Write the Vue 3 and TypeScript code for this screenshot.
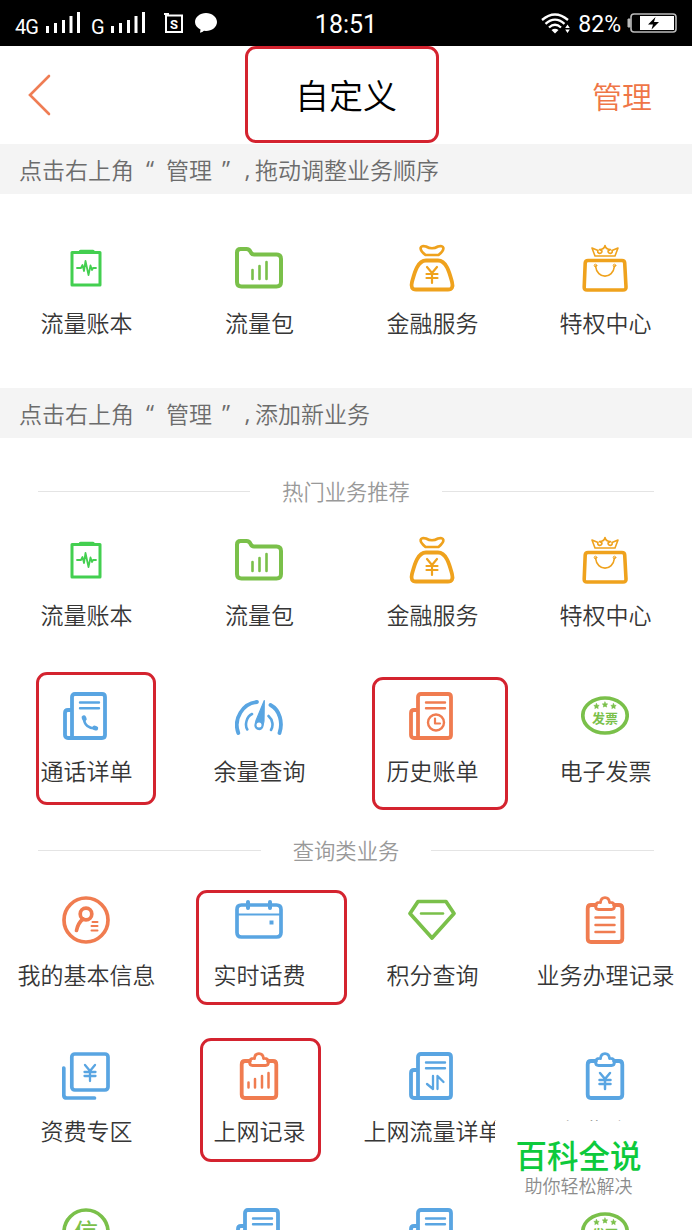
<script setup lang="ts">
import { defineComponent, h } from 'vue'

type IconName =
  | 'ledger' | 'folder' | 'moneybag' | 'giftbag' | 'call' | 'gauge' | 'history'
  | 'invoice' | 'profile' | 'calendar' | 'gem' | 'clipList' | 'cards'
  | 'clipBars' | 'traffic' | 'clipYen' | 'credit' | 'search'

interface Service { label: string; icon: IconName; mark?: string }

const yen = 'M-5 -7L0 -1L5 -7M-5.5 0H5.5M-5.5 4H5.5M0 -1V9'
const paper =
  '<path d="M13 2H40Q43 2 43 5V43Q43 46 40 46H6Q3 46 3 43V21Q3 18 6 18H9M10 46V5Q10 2 13 2" stroke-width="3.8"/><path d="M18 10.5H37M18 16.3H37" stroke-width="2.4"/>'
const clip =
  '<path d="M15 9H10Q6.700 9 6.700 12.500V42.500Q6.700 46 10 46H38Q41.300 46 41.300 42.500V12.500Q41.300 9 38 9H33" stroke-width="3.8"/><path d="M19.500 6.500C20 -.1 28 -.1 28.500 6.500Q33.500 6 33.500 10Q33.500 13.500 30.500 13.500H17.500Q14.500 13.500 14.500 10Q14.500 6 19.500 6.500Z" stroke-width="2.8"/>'
const colors = { blue: '#59a5e2', orange: '#f07c50', green: '#7ac04a', gold: '#efa21d', lime: '#43cf50' }

const art: Record<IconName, { color: string; body: string }> = {
  ledger: {
    color: colors.lime,
    body: '<rect x="10" y="8.500" width="28" height="32.500" stroke-width="3"/><path d="M18.500 7.500H31" stroke-width="3.500"/><path d="M15 24H19L20.500 21L22 27L23.500 17L26.500 31L28.500 21.500L30 26L31 24H34" stroke-width="1.800"/>',
  },
  folder: {
    color: colors.green,
    body: '<path d="M5.500 5H11.500C17 5 14 10.500 19 10.500H41.500Q46 10.500 46 15V38Q46 42.500 41.500 42.500H6.500Q2 42.500 2 38V8.500Q2 5 5.500 5Z" stroke-width="4"/><path d="M17.500 26V35M24.500 22V35M31.500 18V35" stroke-width="2.600"/>',
  },
  moneybag: {
    color: colors.gold,
    body: '<path d="M17.500 11C10 5 12 .8 18 2.500Q24 6 30 2.500C36 .8 38 5 30.500 11Z" stroke-width="2.700"/><path d="M18 16.500H30C39 16.500 42 31 44 38Q46 45.500 40 45.500H8Q2 45.500 4 38C6 31 9 16.500 18 16.500Z" stroke-width="3.800"/><g transform="translate(24 30)"><path d="' + yen + '" stroke-width="2.200"/></g>',
  },
  giftbag: {
    color: colors.gold,
    body: '<path d="M14 12L11 4L17 6.500C15.500 10 21 10.500 21 7L18.500 5.500C22 5.500 23.500 4 24 1.500C24.500 4 26 5.500 29.500 5.500L27 7C27 10.500 32.500 10 31 6.500L37 4L34 12Z" stroke-width="1.600"/><path d="M7 16.500H41Q43.500 16.500 43.700 19L45 43Q45.200 46 42 46H6Q3 46 3.200 43L4.200 19Q4.500 16.500 7 16.500Z" stroke-width="3.600"/><path d="M14.500 22C16 35.500 32 35.500 33.500 22" stroke-width="1.600"/><circle cx="14.500" cy="21.500" r="1.300"/><circle cx="33.500" cy="21.500" r="1.300"/>',
  },
  call: {
    color: colors.blue,
    body: paper + '<path d="M22 26.300C22 33 27 37 34 36.500" stroke-width="2.600"/><path d="M21.800 25.500L22.500 27M32.500 35.800L34 36.300" stroke-width="4.400"/>',
  },
  gauge: {
    color: colors.blue,
    body: '<path d="M3.300 41C-2 27 8 11 22 10M35.500 13C45 18 48 31 44.500 41" stroke-width="3.800"/><path d="M12.300 37.500C9.500 33 11.500 24.500 17 22M33.500 24C38 28 38.500 34 36 38" stroke-width="2.600"/><path d="M29.300 8.500L21 28.500L20 33A4 4 0 0 0 28 34L29 29Z" fill="currentColor" stroke-width="1.200"/><circle cx="24" cy="33" r="2.500" fill="#fff" stroke="none"/>',
  },
  history: {
    color: colors.orange,
    body: paper + '<circle cx="28" cy="30.500" r="8" stroke-width="2.400"/><path d="M27 26.500V31.500H32" stroke-width="2.200"/>',
  },
  invoice: {
    color: colors.green,
    body: '<ellipse cx="24" cy="23.500" rx="22.200" ry="17.500" stroke-width="3.700"/><text x="24" y="30.500" text-anchor="middle" font-size="13" font-weight="700" fill="currentColor" stroke="none">发票</text><path fill="currentColor" stroke="currentColor" stroke-width=".6" d="M15.500 11.500l.8 1.700 1.900.2-1.400 1.300.4 1.900-1.700-.9-1.700.9.4-1.900-1.400-1.300 1.900-.2zM24 10l.8 1.700 1.900.2-1.400 1.300.4 1.900-1.700-.9-1.700.9.4-1.900-1.400-1.300 1.900-.2zM32.500 11.500l.8 1.700 1.900.2-1.400 1.300.4 1.900-1.700-.9-1.700.9.4-1.900-1.400-1.300 1.900-.2z"/>',
  },
  profile: {
    color: colors.orange,
    body: '<circle cx="24" cy="24" r="22" stroke-width="3.700"/><circle cx="24" cy="18" r="5.800" stroke-width="3.700"/><path d="M21 23Q16 27 14.500 34.500" stroke-width="3.700"/><path d="M30.500 26H35.500M29.500 30H35.500M29.500 34.500H35.500" stroke-width="2"/>',
  },
  calendar: {
    color: colors.blue,
    body: '<path d="M6.500 9H41.500Q46 9 46 13.500V36.500Q46 41 41.500 41H6.500Q2 41 2 36.500V13.500Q2 9 6.500 9Z" stroke-width="3.700"/><path d="M3 18.500H45" stroke-width="2"/><path d="M13 6V12M35 6V12" stroke-width="4"/><path d="M34.500 26.500H38.500" stroke-width="4" stroke-linecap="butt"/>',
  },
  gem: {
    color: colors.green,
    body: '<path d="M10 5.500H38L46 17.500L24 42L2 17.500Z" stroke-width="3.700"/><path d="M13 17.500H35" stroke-width="2.500"/>',
  },
  clipList: { color: colors.orange, body: clip + '<path d="M14.500 21.500H33.500M14.500 29H33.500M14.500 36H33.500" stroke-width="2.500"/>' },
  cards: {
    color: colors.blue,
    body: '<rect x="9.800" y="2" width="36.200" height="36" rx="3" stroke-width="3.700"/><path d="M1.800 16V43Q1.800 46 4.800 46H32.500" stroke-width="3.700"/><g transform="translate(28 20)"><path d="' + yen + '" stroke-width="2.300"/></g>',
  },
  clipBars: { color: colors.orange, body: clip + '<path d="M13.500 30.500V35.500M20 27V35.500M27 24V35.500M33.500 21V35.500" stroke-width="2.500"/>' },
  traffic: { color: colors.blue, body: paper + '<path d="M19 32L25 37V24M29.500 37V24L35.500 30" stroke-width="2.300"/>' },
  clipYen: { color: colors.blue, body: clip + '<g transform="translate(24 28)"><path d="' + yen + '" stroke-width="2.500"/></g>' },
  credit: {
    color: colors.green,
    body: '<circle cx="24" cy="24" r="22" stroke-width="3.700"/><text x="24" y="32.500" text-anchor="middle" font-size="24" font-weight="500" fill="currentColor" stroke="none">信</text>',
  },
  search: { color: colors.blue, body: paper + '<circle cx="28" cy="31" r="7.500" stroke-width="2.400"/>' },
}

const ServiceIcon = defineComponent({
  props: { name: { type: String, required: true } },
  setup(props) {
    return () => {
      const item = art[props.name as IconName]
      return h('svg', {
        viewBox: '0 0 48 48', width: 48, height: 48, color: item.color, fill: 'none',
        stroke: 'currentColor', 'stroke-linecap': 'round', 'stroke-linejoin': 'round', innerHTML: item.body,
      })
    }
  },
})

const favorites: Service[] = [
  { label: '流量账本', icon: 'ledger' },
  { label: '流量包', icon: 'folder' },
  { label: '金融服务', icon: 'moneybag' },
  { label: '特权中心', icon: 'giftbag' },
]

const sections: { title: string; id: string; items: Service[] }[] = [
  {
    title: '热门业务推荐',
    id: 'hot',
    items: [
      ...favorites,
      { label: '通话详单', icon: 'call', mark: 'mark-call' },
      { label: '余量查询', icon: 'gauge' },
      { label: '历史账单', icon: 'history', mark: 'mark-history' },
      { label: '电子发票', icon: 'invoice' },
    ],
  },
  {
    title: '查询类业务',
    id: 'query',
    items: [
      { label: '我的基本信息', icon: 'profile' },
      { label: '实时话费', icon: 'calendar', mark: 'mark-fee' },
      { label: '积分查询', icon: 'gem' },
      { label: '业务办理记录', icon: 'clipList' },
      { label: '资费专区', icon: 'cards' },
      { label: '上网记录', icon: 'clipBars', mark: 'mark-net' },
      { label: '上网流量详单', icon: 'traffic' },
      { label: '免费流量', icon: 'clipYen' },
      { label: '', icon: 'credit' },
      { label: '', icon: 'search' },
      { label: '', icon: 'search' },
      { label: '', icon: 'invoice' },
    ],
  },
]
</script>

<template>
  <div class="screen">
    <div class="status">
      <div class="status-left">
        <span class="net">4G</span>
        <svg class="bars" width="36" height="22" viewBox="0 0 36 22" fill="#fff"><path d="M0 14h3v7H0zM8 11h3v10H8zM16 8h3v13h-3zM23.500 4h3v17h-3zM31 0h3v21h-3z" /></svg>
        <span class="net second">G</span>
        <svg class="bars" width="36" height="22" viewBox="0 0 36 22" fill="#fff"><path d="M0 14h3v7H0zM8 11h3v10H8zM16 8h3v13h-3zM23.500 4h3v17h-3zM31 0h3v21h-3z" /></svg>
        <svg class="app-mark" width="20" height="22" viewBox="0 0 20 22"><path d="M2 3.500H18V20H2ZM0 2H5M2 1V6" fill="none" stroke="#fff" stroke-width="2" /><text x="10" y="16.500" fill="#fff" font-size="13" font-weight="700" text-anchor="middle">S</text></svg>
        <svg class="bubble" width="22" height="20" viewBox="0 0 22 20" fill="#fff"><path d="M11 0C17 0 22 4 22 9S17 18 11 18L9 17.800Q7.500 19.500 5 19.800L5.500 16.500C2 15 0 12 0 9C0 4 5 0 11 0Z" /></svg>
      </div>
      <span class="clock">18:51</span>
      <div class="status-right">
        <svg width="29" height="21" viewBox="0 0 29 21" fill="none" stroke="#fff" stroke-width="2.300"><path d="M1 7Q14 -4 27 7M4.500 10.800Q14 2.500 23.500 10.800M8 14.500Q14 9 20 14.500" /><path d="M10.500 17Q14 14.500 17.500 17L14 20.500Z" fill="#fff" stroke="none" /><path d="M26.500 11.500L28.800 15H24.200ZM24.200 16.500H28.800L26.500 20Z" fill="#fff" stroke="none" /></svg>
        <span class="percent">82%</span>
        <svg width="50" height="20" viewBox="0 0 50 20"><rect x="4" y="1" width="45" height="18" rx="3" fill="none" stroke="#bbb" stroke-width="1.600" /><path d="M1 6H3V14H1Z" fill="#bbb" stroke="#bbb" /><path d="M13 3H47V17H13Z" fill="#fff" /><path d="M28.500 4L21 11.500H26L24.500 16.500L32 9H27Z" fill="#000" /></svg>
      </div>
    </div>

    <header class="header">
      <svg class="back" width="24" height="42" viewBox="0 0 24 42"><path d="M21 2L2 21L21 40" fill="none" stroke="#ef7d54" stroke-width="2.600" stroke-linecap="round" /></svg>
      <h1>自定义<i class="mark mark-title"></i></h1>
      <span class="manage">管理</span>
    </header>

    <p class="notice">点击右上角<span class="open">“</span>管理<span class="close">”</span><span class="comma">,</span>拖动调整业务顺序</p>
    <div class="grid favorites">
      <div v-for="item in favorites" :key="item.label" class="cell">
        <ServiceIcon class="icon" :name="item.icon" />
        <span class="label">{{ item.label }}</span>
      </div>
    </div>

    <p class="notice">点击右上角<span class="open">“</span>管理<span class="close">”</span><span class="comma">,</span>添加新业务</p>
    <section v-for="section in sections" :key="section.id">
      <h2 class="title" :class="section.id">{{ section.title }}</h2>
      <div class="grid">
        <div v-for="(item, index) in section.items" :key="index" class="cell">
          <ServiceIcon class="icon" :name="item.icon" />
          <span class="label">{{ item.label }}</span>
          <i v-if="item.mark" class="mark" :class="item.mark"></i>
        </div>
      </div>
    </section>

    <aside class="brand">
      <strong>百科全说</strong>
      <span>助你轻松解决</span>
    </aside>
  </div>
</template>

<style>
html, body { margin: 0; background: #fff; }
</style>

<style scoped>
.screen { position: relative; width: 692px; height: 1230px; overflow: hidden; background: #fff; color: #363636; font-family: "Noto Sans CJK SC", sans-serif; font-weight: 350; }
.status { display: grid; grid-template-columns: 1fr auto 1fr; align-items: center; height: 46px; box-sizing: border-box; padding: 0 15px; background: #000; color: #fff; font-family: Roboto, sans-serif; font-weight: 400; }
.status-left, .status-right { display: flex; align-items: center; }
.status-right { justify-content: flex-end; }
.net { width: 31px; font-size: 20px; line-height: 22px; padding-top: 7px; box-sizing: border-box; letter-spacing: -1px; }
.second { width: 20px; margin-left: 9px; }
.app-mark { margin-left: 17px; }
.bubble { margin-left: 11px; }
.clock { padding-top: 3px; font-size: 25px; line-height: 30px; }
.percent { margin: 0 6px 0 8px; padding-top: 3px; font-size: 23px; line-height: 28px; }
.header { display: grid; grid-template-columns: 1fr auto 1fr; align-items: center; height: 98px; box-sizing: border-box; padding: 0 40px 0 28px; }
.header h1 { position: relative; margin: 0 -12px 0 0; color: #000; font-size: 34px; line-height: 50px; font-weight: 350; }
.manage { justify-self: end; color: #ef7647; font-size: 30px; line-height: 44px; }
.notice { display: flex; height: 50px; margin: 0; padding-left: 19px; background: #f4f4f4; color: #6c6c6c; font-size: 23px; line-height: 50px; white-space: nowrap; }
.open { width: 32px; text-align: center; }
.close { width: 28px; text-align: center; }
.comma { width: 15px; text-align: center; }
.open, .close, .comma { font-family: "Open Sans", sans-serif; font-weight: 400; }
.grid { display: grid; grid-template-columns: repeat(4, 173px); row-gap: 62px; }
.favorites { height: 194px; box-sizing: border-box; padding-top: 50px; }
.cell { position: relative; display: flex; flex-direction: column; align-items: center; height: 94px; gap: 15px; }
.icon { margin-right: 1px; }
.label { font-size: 23px; line-height: 30px; white-space: nowrap; }
.title { display: flex; align-items: center; height: 90px; margin: 0; padding: 8px 38px 0; color: #999; font-size: 21.300px; line-height: 30px; font-weight: 350; gap: 32px; }
.title::before, .title::after { content: ""; flex: 1; height: 1px; background: #e4e4e4; }
.title.query { padding: 19px 38px 1px; }
.mark { position: absolute; box-sizing: border-box; border: 3px solid #d4232f; border-radius: 11px; }
.mark-title { left: -50px; top: -24px; width: 194px; height: 97px; }
.mark-call { left: 36px; top: -20px; width: 120px; height: 133px; }
.mark-history { left: 26px; top: -15px; width: 136px; height: 133px; }
.mark-fee { left: 23px; top: -6px; width: 151px; height: 115px; }
.mark-net { left: 27px; top: -14px; width: 121px; height: 124px; }
.brand { position: absolute; left: 495px; top: 1121px; width: 167px; height: 84px; display: flex; flex-direction: column; align-items: center; background: #fff; padding-top: 14px; box-sizing: border-box; }
.brand strong { color: #0dca3c; font-size: 31.500px; line-height: 39px; font-weight: 500; }
.brand span { color: #8c8c8c; font-size: 18px; line-height: 22px; }
</style>
